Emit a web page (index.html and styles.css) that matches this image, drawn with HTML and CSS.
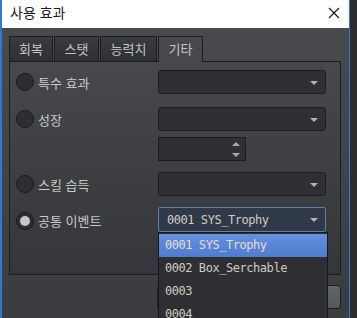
FILE: index.html
```html
<!DOCTYPE html>
<html lang="ko">
	<head>
		<meta charset="UTF-8">
		<title>사용 효과</title>
		<link rel="stylesheet" href="styles.css">
	</head>
	<body>
		<div class="window">
			<!-- 제목 표시줄 -->
			<div class="titlebar">
				<span class="title">사용 효과</span>
				<svg class="close" width="12" height="12" viewBox="0 0 12 12">
					<path d="M1 1 L11 11 M11 1 L1 11" stroke="#111" stroke-width="1.1" fill="none"/>
				</svg>
			</div>

			<div class="content">
				<!-- 탭 -->
				<div class="tabs">
					<div class="tab">회복</div>
					<div class="tab">스탯</div>
					<div class="tab">능력치</div>
					<div class="tab active">기타</div>
				</div>

				<!-- 탭 패널 -->
				<div class="panel">
					<div class="row r1">
						<label class="opt"><span class="radio"></span>특수 효과</label>
						<div class="combo"><span class="arrow"></span></div>
					</div>
					<div class="row r2">
						<label class="opt"><span class="radio"></span>성장</label>
						<div class="combo"><span class="arrow"></span></div>
					</div>
					<div class="row r3">
						<span></span>
						<div class="spin">
							<span class="up"></span>
							<span class="down"></span>
						</div>
					</div>
					<div class="row r4">
						<label class="opt"><span class="radio"></span>스킬 습득</label>
						<div class="combo"><span class="arrow"></span></div>
					</div>
					<div class="row r5">
						<label class="opt"><span class="radio checked"></span>공통 이벤트</label>
						<div class="combo focus"><span class="value">0001 SYS_Trophy</span><span class="arrow"></span></div>
					</div>
				</div>

				<!-- 하단 버튼 -->
				<div class="buttons">
					<button class="btn">확인</button>
					<button class="btn">취소</button>
				</div>
			</div>

			<!-- 펼쳐진 목록 -->
			<div class="dropdown">
				<div class="item selected">0001 SYS_Trophy</div>
				<div class="item">0002 Box_Serchable</div>
				<div class="item">0003</div>
				<div class="item">0004</div>
			</div>
		</div>
	</body>
</html>
```

FILE: styles.css
```css
/* 기본 설정 */
html,
body {
	margin: 0;
	height: 100%;
	overflow: hidden;
}

body {
	background: #2c2e30;
	font-family: "Noto Sans CJK KR", "Noto Sans", sans-serif;
}

/* 창 */
.window {
	position: relative;
	width: 350px;
	height: 318px;
	box-sizing: border-box;
	border-left: 2px solid #2a7bd6;
	border-right: 1px solid #2a7bd6;
	background: linear-gradient(#494b4e, #3a3c3f);
	display: flex;
	flex-direction: column;
}

/* 제목 표시줄 */
.titlebar {
	height: 28px;
	flex: none;
	background: #fff;
	display: flex;
	align-items: center;
	justify-content: space-between;
	padding: 0 9px 4px 8px;
	box-sizing: border-box;
}

.title {
	font-size: 14px;
	color: #1b1b1b;
}

.close {
	margin-top: 2px;
}

.content {
	padding: 8px 8px 0 7px;
	display: flex;
	flex-direction: column;
}

/* 탭 */
.tabs {
	display: flex;
	height: 25px;
	position: relative;
	z-index: 1;
}

.tab {
	box-sizing: border-box;
	height: 25px;
	padding: 0 9px;
	margin-right: 1px;
	background: linear-gradient(#3a3c3f, #2d2f32);
	border: 1px solid #1c1d1f;
	border-bottom: none;
	color: #c4c4c4;
	font-size: 13px;
	line-height: 23px;
	text-align: center;
}

.tab:nth-child(1) { width: 44px; }
.tab:nth-child(2) { width: 45px; }
.tab:nth-child(3) { width: 57px; }

.tab.active {
	width: 45px;
	background: #47494c;
	height: 26px;
	margin-bottom: -1px;
}

/* 패널 */
.panel {
	height: 214px;
	box-sizing: border-box;
	border: 1px solid #1c1d1f;
	background: linear-gradient(#46484b, #343639);
	padding: 8px 14px 0 6px;
	display: flex;
	flex-direction: column;
}

.row {
	display: grid;
	grid-template-columns: 142px 168px;
	align-items: center;
}

.r2 { margin-top: 13px; }
.r3 { margin-top: 6px; }
.r4 { margin-top: 11px; }
.r5 { margin-top: 11px; }

.opt {
	display: flex;
	align-items: center;
	gap: 4px;
	color: #c8c8c8;
	font-size: 13px;
}

.r5 .opt {
	margin-top: 2px;
}

/* 라디오 버튼 */
.radio {
	width: 18px;
	height: 18px;
	box-sizing: border-box;
	border-radius: 50%;
	border: 1px solid #1a1b1d;
	background: #2c2e31;
	display: flex;
	align-items: center;
	justify-content: center;
}

.radio.checked::after {
	content: "";
	width: 10px;
	height: 10px;
	border-radius: 50%;
	background: #c6c6c6;
}

/* 콤보 박스 */
.combo {
	position: relative;
	height: 24px;
	box-sizing: border-box;
	border: 1px solid #1c1d1f;
	border-radius: 3px;
	background: #2e3033;
	display: flex;
	align-items: center;
	padding-left: 8px;
}

.combo.focus {
	height: 25px;
	border-color: #5d80a6;
	border-radius: 2px;
	background: #2f3947;
}

.arrow {
	position: absolute;
	right: 7px;
	top: 10px;
	width: 0;
	height: 0;
	border-left: 4px solid transparent;
	border-right: 4px solid transparent;
	border-top: 4px solid #b2b2b2;
}

.value,
.item {
	font-family: "DejaVu Sans Mono", monospace;
	font-size: 12px;
	letter-spacing: -0.45px;
	color: #d2cbc4;
}

/* 스핀 박스 */
.spin {
	position: relative;
	width: 88px;
	height: 24px;
	box-sizing: border-box;
	border: 1px solid #1c1d1f;
	background: #2e3033;
}

.up,
.down {
	position: absolute;
	right: 5px;
	width: 0;
	height: 0;
	border-left: 4px solid transparent;
	border-right: 4px solid transparent;
}

.up {
	top: 4px;
	border-bottom: 4px solid #a8a8a8;
}

.down {
	top: 15px;
	border-top: 4px solid #a8a8a8;
}

/* 하단 버튼 */
.buttons {
	display: flex;
	justify-content: flex-end;
	gap: 8px;
	margin-top: 10px;
}

.btn {
	width: 88px;
	height: 24px;
	border: 1px solid #1c1d1f;
	border-radius: 3px;
	background: linear-gradient(#626568, #55585b);
	color: #ddd;
	font-size: 13px;
	font-family: inherit;
}

/* 펼쳐진 목록 */
.dropdown {
	position: absolute;
	left: 156px;
	top: 232px;
	width: 170px;
	height: 100px;
	box-sizing: border-box;
	border: 1px solid #17181a;
	background: #2d2f32;
	padding-top: 1px;
	z-index: 2;
}

.item {
	height: 23px;
	line-height: 23px;
	padding-left: 6px;
}

.item.selected {
	background: linear-gradient(#6590de, #4f7cd0);
	color: #e4ddd6;
}
```
